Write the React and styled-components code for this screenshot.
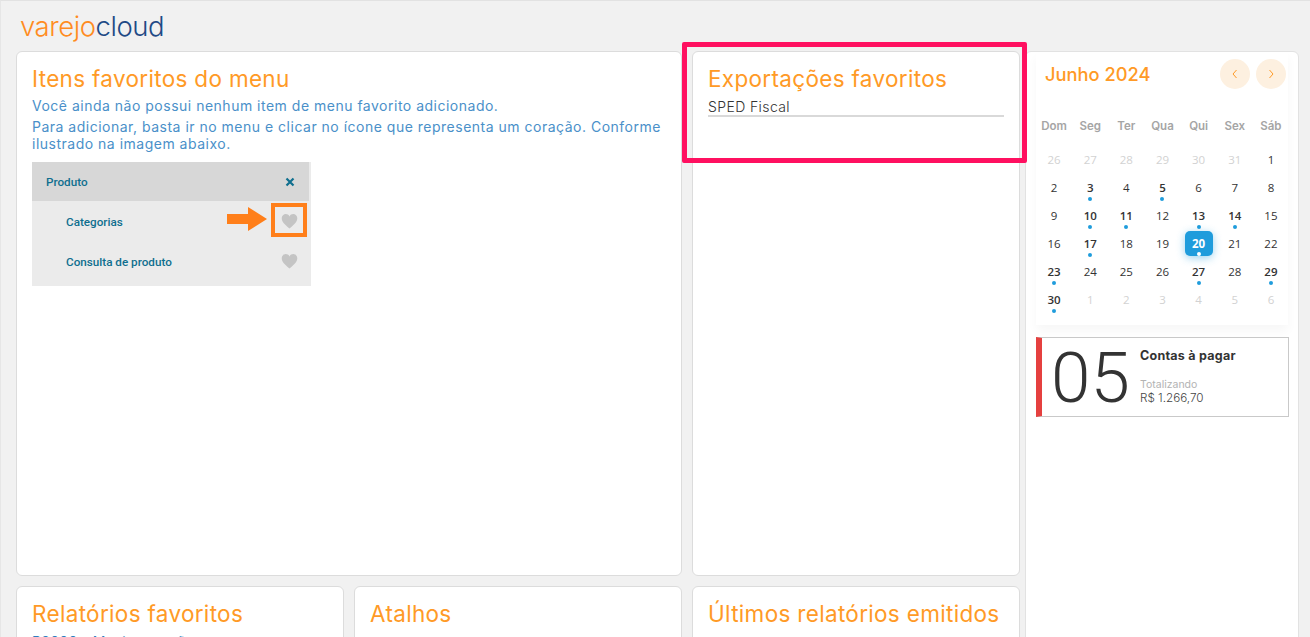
import React from 'react';
import styled, { createGlobalStyle } from 'styled-components';

const GlobalStyle = createGlobalStyle`
    html, body {
        margin: 0;
        height: 100%;
        overflow: hidden;
        background: #f1f1f1;
    }
    * { box-sizing: border-box; }
`;

const FONT = `Inter, "Noto Sans", "Liberation Sans", sans-serif`;

const Page = styled.div`
    width: 1310px;
    height: 637px;
    overflow: hidden;
    position: relative;
    background: #f1f1f1;
    border-top: 1px solid #e2e2e2;
    border-left: 1px solid #e6e6e6;
    font-family: ${FONT};
`;

const Shell = styled.div`
    display: grid;
    grid-template-columns: 1008px 274px;
    column-gap: 1px;
    padding-left: 15px;
`;

const Logo = styled.div`
    height: 50px;
    padding: 7px 0 0 4px;
    font-size: 27.5px;
    line-height: 36px;
    font-weight: 300;
    letter-spacing: -0.45px;
    color: #ff8c1f;
    span { color: #1f4a86; }
`;

const Main = styled.div`
    display: flex;
    flex-direction: column;
`;

const Columns = styled.div`
    display: grid;
    grid-template-columns: 666px 328px;
    column-gap: 10px;
    margin-bottom: 10px;
`;

const BottomRow = styled.div`
    display: grid;
    grid-template-columns: 328px 328px 328px;
    column-gap: 10px;
`;

const Card = styled.section`
    height: ${props => props.height}px;
    background: #fff;
    border: 1px solid #dcdcdc;
    border-radius: 6px;
    padding: 12px 15px;
`;

const Title = styled.h2`
    margin: 0;
    font-size: 22.5px;
    line-height: 30px;
    font-weight: 400;
    letter-spacing: 0.32px;
    color: #ff9a26;
    white-space: nowrap;
`;

const Note = styled.p`
    margin: ${props => props.gap}px 0 0;
    font-size: 14px;
    line-height: 17px;
    letter-spacing: 0.5px;
    color: #4a90c9;
    width: 640px;
`;

const Sample = styled.div`
    width: 279px;
    margin-top: 10px;
    padding-bottom: 5px;
    background: #ebebeb;
    font-family: Roboto, "Liberation Sans", sans-serif;
    font-size: 11.7px;
    font-weight: 500;
    color: #0f6f8f;
`;

const SampleHead = styled.div`
    display: flex;
    align-items: center;
    justify-content: space-between;
    height: 39px;
    width: 277px;
    padding: 0 14px 0 14px;
    background: #d7d7d7;
`;

const SampleRow = styled.div`
    display: flex;
    align-items: center;
    height: 40px;
    padding: 1px 13px 0 34px;
    position: relative;
`;

const RowLabel = styled.span`
    flex: 1;
`;

const HeartFrame = styled.span`
    position: absolute;
    right: 4px;
    top: 2px;
    width: 36px;
    height: 34px;
    border: 4px solid #ff7f1a;
`;

const ArrowMark = styled.svg`
    position: absolute;
    right: 43px;
    top: 6px;
`;

const HeartIcon = styled.svg`
    position: relative;
    display: block;
`;

const ExportItem = styled.div`
    margin-top: 5px;
    border-bottom: 2px solid #d9d9d9;
    font-size: 14px;
    line-height: 16px;
    letter-spacing: 0.4px;
    font-weight: 300;
    color: #333;
`;

const ReportLink = styled.div`
    margin-top: 4px;
    font-size: 14px;
    line-height: 18px;
    letter-spacing: 0.3px;
    color: #2b7fc0;
    white-space: nowrap;
`;

const Side = styled.aside`
    height: 640px;
    background: #fff;
    border: 1px solid #e2e2e2;
    border-radius: 6px 6px 0 0;
    margin-top: 50px;
    padding: 0 10px;
`;

const CalendarBox = styled.div`
    height: 273px;
    margin: 0 0 12px;
    box-shadow: 0 6px 10px rgba(0, 0, 0, 0.035);
`;

const CalendarHead = styled.div`
    display: flex;
    align-items: center;
    justify-content: space-between;
    height: 44px;
    padding: 0 2px 0 9px;
`;

const Month = styled.div`
    font-size: 18.3px;
    font-weight: 500;
    color: #ff9a26;
`;

const NavGroup = styled.div`
    display: flex;
    gap: 6px;
`;

const NavButton = styled.button`
    width: 30px;
    height: 30px;
    padding: 0;
    display: flex;
    align-items: center;
    justify-content: center;
    border: 0;
    border-radius: 50%;
    background: #fdf0e0;
    color: #ff9a26;
`;

const Grid = styled.div`
    display: grid;
    grid-template-columns: repeat(7, 36.15px);
`;

const WeekDay = styled.div`
    height: 28px;
    display: flex;
    align-items: center;
    justify-content: center;
    font-size: 11.5px;
    font-weight: 600;
    color: #a5a5a5;
`;

const WeekRow = styled(Grid)`
    margin-top: 16px;
    margin-bottom: 5px;
`;

const Day = styled.div`
    height: 28px;
    display: flex;
    align-items: center;
    justify-content: center;
    position: relative;
    font-family: "Open Sans", ${FONT};
    font-size: 11.5px;
    font-weight: ${props => (props.$mark ? 600 : 400)};
    color: ${props => (props.$muted ? '#d2d2d2' : '#333')};
`;

const Selected = styled.div`
    width: 28px;
    height: 25px;
    margin-top: 1px;
    display: flex;
    align-items: center;
    justify-content: center;
    border-radius: 5px;
    background: #1f9cdc;
    color: #fff;
    font-weight: 700;
    box-shadow: 0 2px 8px rgba(31, 156, 220, 0.45);
`;

const Dot = styled.span`
    position: absolute;
    left: 50%;
    width: 4px;
    height: 4px;
    margin-left: -2px;
    border-radius: 50%;
    background: ${props => (props.$light ? '#fff' : '#1f9cdc')};
    bottom: ${props => (props.$light ? '1px' : '0')};
`;

const Bill = styled.div`
    display: flex;
    height: 80px;
    width: 253px;
    border: 1px solid #c9c9c9;
    border-left: 6px solid #e5403f;
`;

const BillCount = styled.div`
    width: 98px;
    padding-left: 9px;
    font-family: Roboto, sans-serif;
    font-size: 71px;
    font-weight: 300;
    line-height: 79px;
    color: #333;
`;

const BillInfo = styled.div`
    display: flex;
    flex-direction: column;
    padding-top: 10px;
`;

const BillTitle = styled.div`
    font-size: 12.5px;
    line-height: 16px;
    font-weight: 700;
    letter-spacing: 0.25px;
    color: #333;
`;

const BillLabel = styled.div`
    margin-top: 14px;
    font-size: 10.5px;
    line-height: 13px;
    color: #b3b3b3;
`;

const BillValue = styled.div`
    font-size: 11.7px;
    line-height: 14px;
    font-weight: 300;
    color: #444;
`;

const Highlight = styled.div`
    position: absolute;
    left: 681px;
    top: 41px;
    width: 345px;
    height: 121px;
    border: 5px solid #ff1060;
    border-radius: 2px;
    pointer-events: none;
`;

const Heart = ({ size = 17 }) => (
    <HeartIcon width={size} height={size} viewBox="0 0 24 24">
        <path
            fill="#c4c4c4"
            d="M12 22 C9 19 1 14 1 7.5 C1 3.8 3.8 1.5 6.8 1.5 C9 1.5 11 2.7 12 4.8 C13 2.7 15 1.5 17.2 1.5 C20.2 1.5 23 3.8 23 7.5 C23 14 15 19 12 22 Z"
        />
    </HeartIcon>
);

const weekDays = ['Dom', 'Seg', 'Ter', 'Qua', 'Qui', 'Sex', 'Sáb'];
const marked = [3, 5, 10, 11, 13, 14, 17, 23, 27, 29, 30];

const days = [
    ...[26, 27, 28, 29, 30, 31].map(n => ({ n, muted: true })),
    ...Array.from({ length: 30 }, (_, i) => ({ n: i + 1 })),
    ...[1, 2, 3, 4, 5, 6].map(n => ({ n, muted: true })),
];

const App = () => {
    return (
        <Page>
            <GlobalStyle />
            <Shell>
                <Main>
                    <Logo>varejo<span>cloud</span></Logo>
                    <Columns>
                        <Card height={525}>
                            <Title>Itens favoritos do menu</Title>
                            <Note gap={3}>Você ainda não possui nenhum item de menu favorito adicionado.</Note>
                            <Note gap={4}>
                                Para adicionar, basta ir no menu e clicar no ícone que representa um coração. Conforme ilustrado na imagem abaixo.
                            </Note>
                            <Sample>
                                <SampleHead>
                                    Produto
                                    <svg width="10" height="10" viewBox="0 0 10 10">
                                        <path d="M1.5 1.5 L8.5 8.5 M8.5 1.5 L1.5 8.5" stroke="#0f6f8f" strokeWidth="2.2" />
                                    </svg>
                                </SampleHead>
                                <SampleRow>
                                    <RowLabel>Categorias</RowLabel>
                                    <ArrowMark width="41" height="24" viewBox="0 0 41 24">
                                        <path fill="#ff7f1a" d="M0 7 H21 V0 L40 12 L21 24 V17 H0 Z" />
                                    </ArrowMark>
                                    <HeartFrame />
                                    <Heart />
                                </SampleRow>
                                <SampleRow>
                                    <RowLabel>Consulta de produto</RowLabel>
                                    <Heart />
                                </SampleRow>
                            </Sample>
                        </Card>
                        <Card height={525}>
                            <Title>Exportações favoritos</Title>
                            <ExportItem>SPED Fiscal</ExportItem>
                        </Card>
                    </Columns>
                    <BottomRow>
                        <Card height={120}>
                            <Title>Relatórios favoritos</Title>
                            <ReportLink>R2000 - Movimentações</ReportLink>
                        </Card>
                        <Card height={120}>
                            <Title>Atalhos</Title>
                        </Card>
                        <Card height={120}>
                            <Title>Últimos relatórios emitidos</Title>
                        </Card>
                    </BottomRow>
                </Main>
                <Side>
                    <CalendarBox>
                        <CalendarHead>
                            <Month>Junho 2024</Month>
                            <NavGroup>
                                <NavButton aria-label="Anterior">
                                    <svg width="8" height="10" viewBox="0 0 8 10">
                                        <path d="M5.5 1 L2 5 L5.5 9" fill="none" stroke="#ff9a26" strokeWidth="1" />
                                    </svg>
                                </NavButton>
                                <NavButton aria-label="Próximo">
                                    <svg width="8" height="10" viewBox="0 0 8 10">
                                        <path d="M2.5 1 L6 5 L2.5 9" fill="none" stroke="#ff9a26" strokeWidth="1" />
                                    </svg>
                                </NavButton>
                            </NavGroup>
                        </CalendarHead>
                        <WeekRow>
                            {weekDays.map(d => <WeekDay key={d}>{d}</WeekDay>)}
                        </WeekRow>
                        <Grid>
                            {days.map((d, i) => {
                                const isMarked = !d.muted && marked.includes(d.n);
                                if (!d.muted && d.n === 20) {
                                    return (
                                        <Day key={i} $mark>
                                            <Selected>20</Selected>
                                            <Dot $light />
                                        </Day>
                                    );
                                }
                                return (
                                    <Day key={i} $muted={d.muted} $mark={isMarked}>
                                        {d.n}
                                        {isMarked && <Dot />}
                                    </Day>
                                );
                            })}
                        </Grid>
                    </CalendarBox>
                    <Bill>
                        <BillCount>05</BillCount>
                        <BillInfo>
                            <BillTitle>Contas à pagar</BillTitle>
                            <BillLabel>Totalizando</BillLabel>
                            <BillValue>R$ 1.266,70</BillValue>
                        </BillInfo>
                    </Bill>
                </Side>
            </Shell>
            <Highlight />
        </Page>
    );
};

export default App;
